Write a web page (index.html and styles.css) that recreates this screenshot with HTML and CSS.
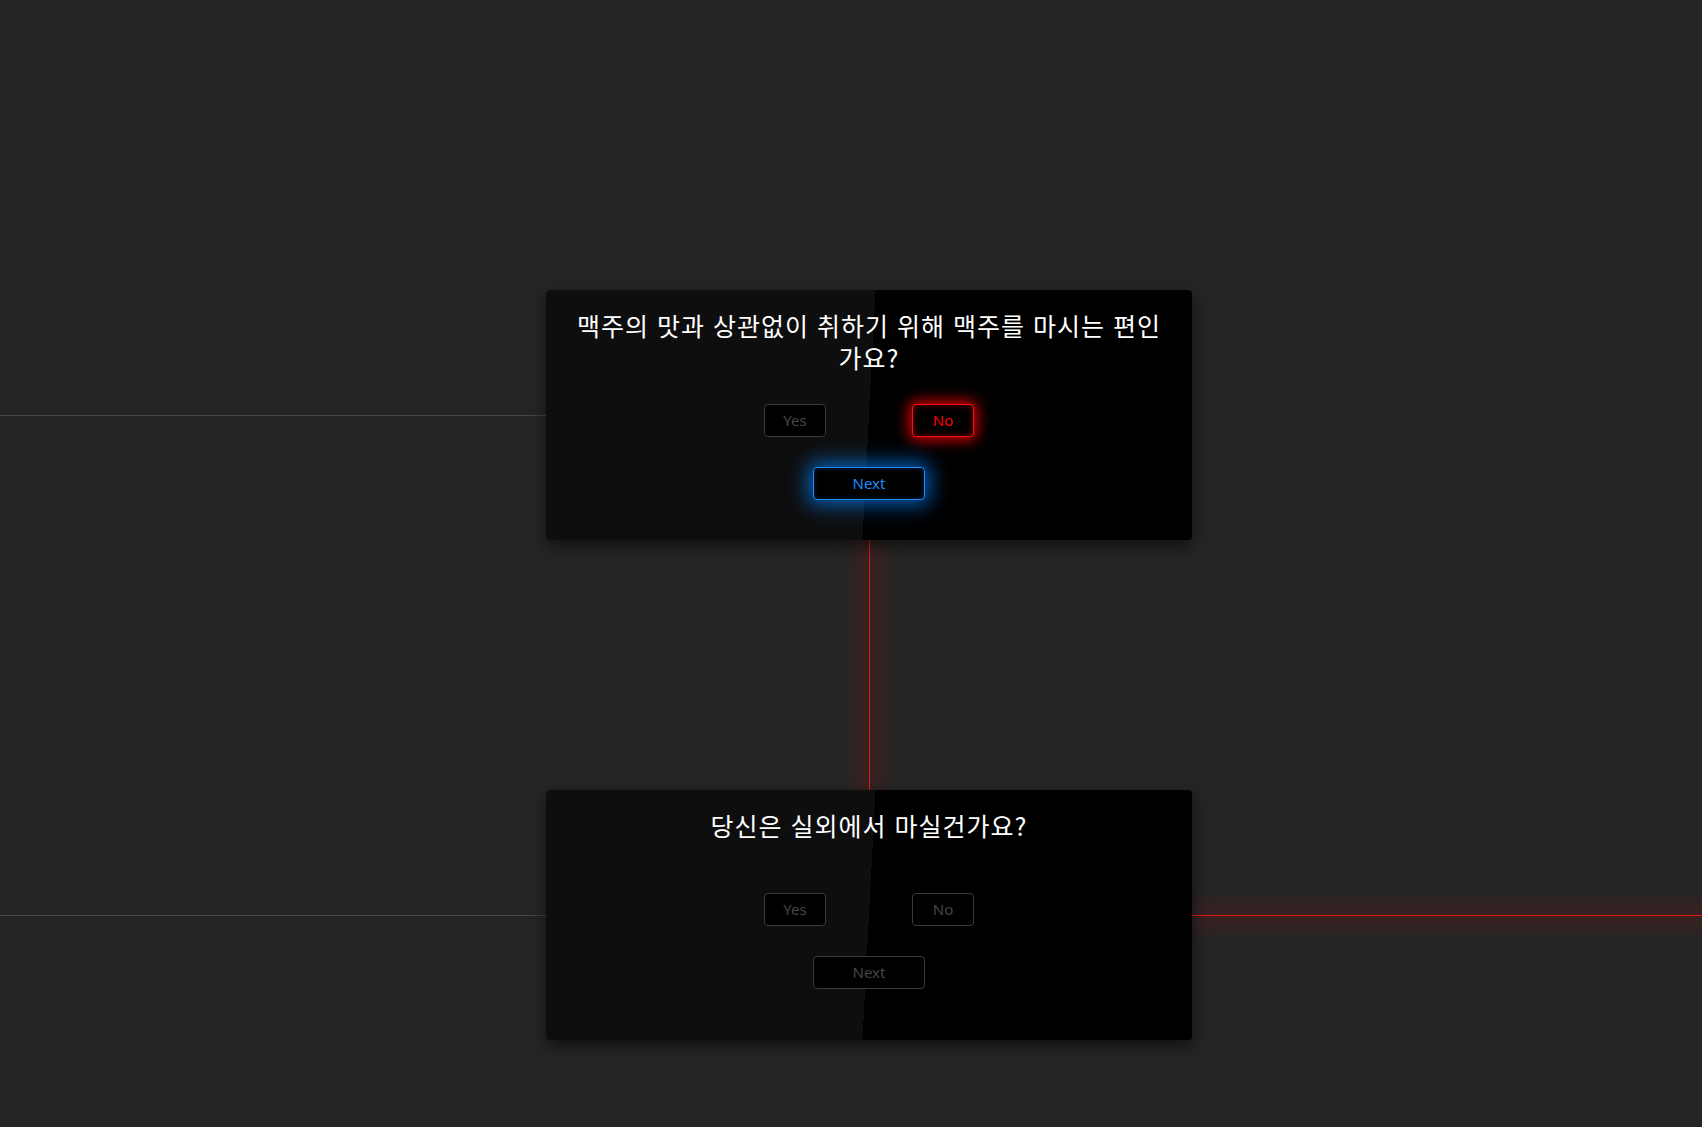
FILE: index.html
```html
<!DOCTYPE html>
<html lang="ko">
<head>
<meta charset="utf-8">
<title>Survey</title>
<link rel="stylesheet" href="styles.css">
</head>
<body>
<main class="flow">
  <section class="step step--done">
    <div class="card">
      <h2 class="question">맥주의 맛과 상관없이 취하기 위해 맥주를 마시는 편인가요?</h2>
      <div class="answers">
        <button class="btn btn--answer">Yes</button>
        <button class="btn btn--answer btn--no-selected">No</button>
      </div>
      <div class="actions">
        <button class="btn btn--next btn--next-active">Next</button>
      </div>
    </div>
  </section>
  <div class="connector"></div>
  <section class="step step--current">
    <div class="card">
      <h2 class="question">당신은 실외에서 마실건가요?</h2>
      <div class="answers">
        <button class="btn btn--answer">Yes</button>
        <button class="btn btn--answer">No</button>
      </div>
      <div class="actions">
        <button class="btn btn--next">Next</button>
      </div>
    </div>
  </section>
</main>
</body>
</html>
```
FILE: styles.css
```css
html, body {
  margin: 0;
  padding: 0;
  height: 100%;
}

body {
  background: #252525;
  overflow: hidden;
  font-family: "Noto Sans", "Noto Sans CJK KR", sans-serif;
}

.flow {
  display: flex;
  flex-direction: column;
  align-items: center;
  padding-top: 290px;
  padding-left: 36px;
}

.step {
  position: relative;
}

/* gray line coming in from the left edge */
.step::before {
  content: "";
  position: absolute;
  top: 125px;
  right: 100%;
  width: 100vw;
  height: 1px;
  background: #454545;
}

/* red line going out to the right edge */
.step--current::after {
  content: "";
  position: absolute;
  top: 125px;
  left: 100%;
  width: 100vw;
  height: 1px;
  background: #e81515;
  box-shadow: 0 0 22px 6px rgba(255, 0, 0, 0.2);
}

.card {
  position: relative;
  z-index: 1;
  box-sizing: border-box;
  width: 646px;
  height: 250px;
  padding: 19px 30px 20px;
  border-radius: 4px;
  background: linear-gradient(93deg, #0e0e0e 50%, #000 50%);
  box-shadow: 0 6px 16px rgba(0, 0, 0, 0.55);
  display: flex;
  flex-direction: column;
  align-items: center;
}

.question {
  margin: 0 0 31px;
  min-height: 53px;
  width: 100%;
  color: #fff;
  font-family: "Noto Sans CJK KR", sans-serif;
  font-weight: 400;
  font-size: 25px;
  letter-spacing: 1px;
  line-height: 32px;
  text-align: center;
}

.answers {
  display: flex;
  gap: 86px;
}

.actions {
  display: flex;
  justify-content: center;
  margin-top: 30px;
}

.btn {
  box-sizing: border-box;
  height: 33px;
  padding: 0;
  background: #000;
  border: 1px solid #3b3b3b;
  border-radius: 4px;
  color: #454545;
  font-family: "Noto Sans", sans-serif;
  font-size: 15px;
  line-height: 31px;
  cursor: pointer;
}

.btn--answer {
  width: 62px;
}

.btn--next {
  width: 112px;
}

.btn--no-selected {
  border-color: #ff1010;
  color: #ff0000;
  box-shadow: 0 0 14px 3px rgba(255, 0, 0, 0.85), inset 0 0 7px rgba(255, 0, 0, 0.4);
}

.btn--next-active {
  border-color: #1a8cff;
  color: #1a8cff;
  box-shadow: 0 0 20px 5px rgba(0, 130, 255, 0.7), inset 0 0 5px rgba(0, 130, 255, 0.3);
}

.connector {
  width: 1px;
  height: 250px;
  background: #e81515;
  box-shadow: 0 0 24px 7px rgba(255, 0, 0, 0.2);
}
```
